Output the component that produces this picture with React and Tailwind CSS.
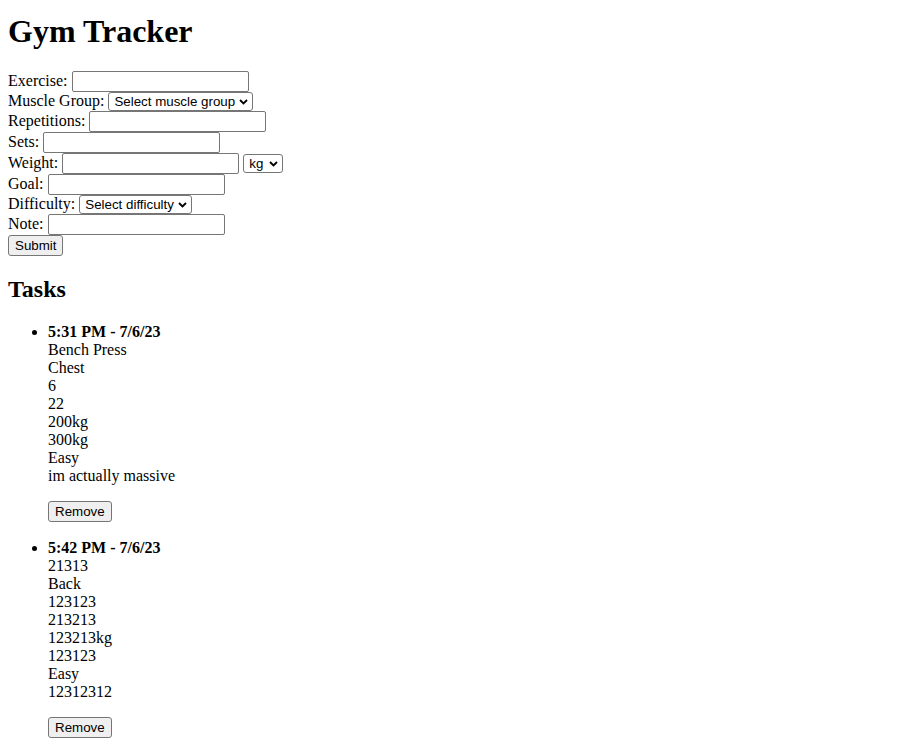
const tasks = [
  {
    time: "5:31 PM - 7/6/23",
    lines: ["Bench Press", "Chest", "6", "22", "200kg", "300kg", "Easy", "im actually massive"],
  },
  {
    time: "5:42 PM - 7/6/23",
    lines: ["21313", "Back", "123123", "213213", "123213kg", "123123", "Easy", "12312312"],
  },
];

const inputCls =
  "h-[21px] w-[177px] rounded-[2px] border border-[#767676] bg-white px-[3px] py-[2px] align-baseline font-['Liberation_Sans',Arial,sans-serif] text-[13.33px] leading-[normal]";
const buttonCls =
  "h-[21px] rounded-[3px] border border-[#767676] bg-[#efefef] px-[6px] font-['Liberation_Sans',Arial,sans-serif] text-[13.33px] leading-[normal] text-black";

function Select({ width, label }) {
  return (
    <span className="relative inline-block align-baseline">
      <select
        className={`${width} h-[19px] appearance-none rounded-[3px] border border-[#767676] bg-white pl-[5px] pr-[16px] font-['Liberation_Sans',Arial,sans-serif] text-[13.33px] leading-[normal] text-black`}
        defaultValue=""
      >
        <option value="">{label}</option>
      </select>
      <svg
        className="pointer-events-none absolute right-[5px] top-[7px] h-[6px] w-[9px]"
        viewBox="0 0 9 6"
        fill="none"
        stroke="#000"
        strokeWidth="1.8"
      >
        <path d="M1 1l3.5 3.5L8 1" />
      </svg>
    </span>
  );
}

function Field({ label, children }) {
  return (
    <div>
      {label}: {children}
    </div>
  );
}

export default function App() {
  return (
    <div className="min-h-screen bg-white px-2 font-['Liberation_Serif','Times_New_Roman',serif] text-[16px] leading-[normal] text-black">
      <h1 className="pt-[13px] pb-[21.44px] text-[32px] font-bold leading-[normal]">Gym Tracker</h1>

      <form>
        <Field label="Exercise">
          <input type="text" className={inputCls} />
        </Field>
        <Field label="Muscle Group">
          <Select width="w-[145px]" label="Select muscle group" />
        </Field>
        <Field label="Repetitions">
          <input type="text" className={inputCls} />
        </Field>
        <Field label="Sets">
          <input type="text" className={inputCls} />
        </Field>
        <Field label="Weight">
          <input type="text" className={inputCls} /> <Select width="w-[40px]" label="kg" />
        </Field>
        <Field label="Goal">
          <input type="text" className={inputCls} />
        </Field>
        <Field label="Difficulty">
          <Select width="w-[113px]" label="Select difficulty" />
        </Field>
        <Field label="Note">
          <input type="text" className={inputCls} />
        </Field>
        <button type="button" className={buttonCls}>
          Submit
        </button>
      </form>

      <h2 className="mt-[19.92px] mb-[19.92px] text-[24px] font-bold leading-[normal]">Tasks</h2>

      <ul className="list-disc pl-[40px]">
        {tasks.map((t) => (
          <li key={t.time} className="mb-[17px]">
            <strong className="font-bold">{t.time}</strong>
            {t.lines.map((l, i) => (
              <div key={i}>{l}</div>
            ))}
            <button type="button" className={`${buttonCls} mt-[16px] block`}>
              Remove
            </button>
          </li>
        ))}
      </ul>
    </div>
  );
}
